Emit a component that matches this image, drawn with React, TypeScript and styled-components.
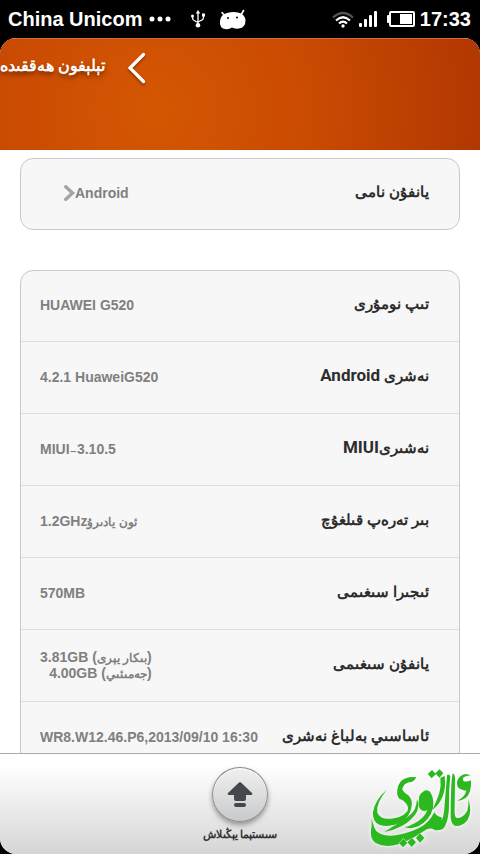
import React from "react";
import styled, { createGlobalStyle } from "styled-components";

const GlobalStyle = createGlobalStyle`
  * { box-sizing: border-box; }
  html, body { margin: 0; background: #000; }
  button { border: 0; padding: 0; background: none; font: inherit; color: inherit; cursor: pointer; }
`;

const arabic = `"Noto Sans", sans-serif`;
const latin = `"Liberation Sans", "DejaVu Sans", sans-serif`;

const Screen = styled.div`
  display: flex;
  flex-direction: column;
  height: 100vh;
  overflow: hidden;
  font-family: ${latin};
`;

const StatusBar = styled.div`
  display: flex;
  align-items: center;
  justify-content: space-between;
  flex: none;
  height: 38px;
  padding: 0 9px 0 8px;
  color: #fff;
  font-size: 20px;
  font-weight: 700;
  line-height: 38px;
`;

const StatusGroup = styled.div<{ $gap: number }>`
  display: flex;
  align-items: center;
  gap: ${(p) => p.$gap}px;
`;

const Window = styled.div`
  display: flex;
  flex-direction: column;
  flex: 1;
  min-height: 0;
  overflow: hidden;
  border-radius: 16px;
  background: #fff;
`;

const Header = styled.header`
  display: flex;
  align-items: flex-start;
  gap: 21px;
  flex: none;
  height: 112px;
  padding-top: 13px;
  color: #fff;
  border-top: 1px solid #d2693a;
  background: radial-gradient(circle 360px at 155px 70px, #d45703 0%, #ca4b02 42%, #bd4002 70%, #ad3401 100%);
`;

const Title = styled.h1`
  margin: 0;
  font-family: ${arabic};
  font-size: 16px;
  font-weight: 700;
  line-height: 26px;
  white-space: nowrap;
  text-shadow: 0 3px 4px rgba(70, 20, 0, 0.55);
`;

const BackButton = styled.button`
  display: flex;
  svg { filter: drop-shadow(0 2px 1px rgba(70, 20, 0, 0.5)); }
`;

const Content = styled.main`
  display: flex;
  flex-direction: column;
  gap: 40px;
  flex: 1;
  min-height: 0;
  overflow: hidden;
  padding: 8px 20px 0;
`;

const Card = styled.dl`
  flex: none;
  margin: 0;
  border: 1px solid #c8c8c8;
  border-radius: 13px;
  background: #f7f7f7;
`;

const Row = styled.div`
  display: flex;
  flex-direction: row-reverse;
  align-items: center;
  justify-content: space-between;
  height: 72px;
  padding: 0 30px 0 19px;
  border-bottom: 1px solid #dedede;
  &:first-child { height: 71px; }
  &:last-child { border-bottom: 0; }
  &:only-child { height: 70px; }
`;

const Label = styled.dt`
  padding-bottom: 6px;
  color: #2d2d2d;
  font-family: ${arabic};
  font-size: 15px;
  font-weight: 700;
  line-height: 24px;
  white-space: nowrap;
`;

const LabelLatin = styled.span`
  font-family: Roboto, sans-serif;
  font-size: 17px;
`;

const Value = styled.dd`
  margin: 0;
  padding-bottom: 2px;
  color: #808080;
  font-size: 14px;
  font-weight: 700;
  line-height: 16px;
  text-align: right;
  white-space: nowrap;
`;

const ValueLine = styled.div`
  height: 16px;
`;

const ValueArabic = styled.span`
  font-family: ${arabic};
  font-size: 12px;
`;

const NameButton = styled.button`
  display: flex;
  align-items: center;
  margin-left: 24px;
`;

const Footer = styled.footer`
  display: grid;
  grid-template-columns: 1fr auto 1fr;
  flex: none;
  height: 101px;
  border-top: 1px solid #a9a9a9;
  background: linear-gradient(#fff 0%, #fff 12%, #d5d5d5 100%);
`;

const UpdateButton = styled.button`
  display: flex;
  flex-direction: column;
  align-items: center;
  grid-column: 2;
  gap: 2px;
  padding-top: 13px;
  align-self: start;
  color: #333;
  font-family: ${arabic};
  font-size: 11px;
  font-weight: 700;
  line-height: 20px;
`;

const Disc = styled.span`
  display: flex;
  align-items: center;
  justify-content: center;
  width: 56px;
  height: 55px;
  border: 1px solid #8b8b8b;
  border-radius: 50%;
  background: linear-gradient(#f0f0f1, #c9cacc);
  box-shadow: 0 3px 5px rgba(0, 0, 0, 0.35), inset 0 1px 1px #fff;
`;

const Brand = styled.div`
  display: flex;
  justify-content: flex-end;
  align-items: flex-start;
  padding: 14px 6px 0 0;
  svg { filter: drop-shadow(0 0 2px #fff); }
`;

const Dots = () => (
  <svg width="22" height="6" viewBox="0 0 22 6" fill="#fff">
    <circle cx="3" cy="3" r="2.5" />
    <circle cx="11" cy="3" r="2.5" />
    <circle cx="19" cy="3" r="2.5" />
  </svg>
);

const Usb = () => (
  <svg width="16" height="18" viewBox="0 0 16 18" fill="none" stroke="#fff" strokeWidth="1.3">
    <path d="M8 3v12M2.500 5v3q0 2 2.500 3l3 1.500M13.500 5v2.500q0 2-2.500 3l-3 1.500" />
    <path d="M8 0l2.200 3.600H5.800z" fill="#fff" stroke="none" />
    <circle cx="8" cy="15.300" r="2.300" fill="#fff" stroke="none" />
    <circle cx="2.500" cy="6" r="1.500" fill="#fff" stroke="none" />
    <path d="M12 3.500h3v3h-3z" fill="#fff" stroke="none" />
  </svg>
);

const Mascot = () => (
  <svg width="28" height="21" viewBox="0 0 28 21">
    <path d="M3 3.500L6 7M24.500 1.500L22 6" stroke="#fff" strokeWidth="1.600" strokeLinecap="round" />
    <path
      d="M1 12Q2 5 8 4q6-1.500 11-.5 7 1.500 7.500 8 0 7-6.500 8-5 .5-7-1-2.500 2-6 1.800Q0 19.500 1 12z"
      fill="#fff"
    />
    <circle cx="9" cy="9" r="1" fill="#000" />
    <circle cx="18" cy="8.500" r="1" fill="#000" />
  </svg>
);

const Wifi = () => (
  <svg width="22" height="17" viewBox="0 0 22 17" fill="none" strokeWidth="2.200">
    <path d="M1 6.500Q11-2.500 21 6.500" stroke="#555" />
    <path d="M4 9.500Q11 3 18 9.500M7 12.500Q11 8.500 15 12.500" stroke="#fff" />
    <circle cx="11" cy="15" r="1.700" fill="#fff" />
  </svg>
);

const Signal = () => (
  <svg width="18" height="16" viewBox="0 0 18 16" fill="#fff">
    <rect y="12" width="3" height="4" rx="1" />
    <rect x="5" y="8" width="3" height="8" rx="1" />
    <rect x="10" y="4" width="3" height="12" rx="1" />
    <rect x="15" width="3" height="16" rx="1" />
  </svg>
);

const Battery = () => (
  <svg width="28" height="16" viewBox="0 0 28 16" fill="#fff">
    <rect x="3" y="1" width="24" height="14" rx="1" fill="none" stroke="#fff" strokeWidth="2" />
    <rect y="4" width="3" height="8" rx="1" />
    <rect x="13" y="3" width="12" height="10" />
  </svg>
);

const BackIcon = () => (
  <svg width="20" height="32" viewBox="0 0 20 32" fill="none" stroke="#fff" strokeWidth="3.200">
    <path d="M17.500 2.500L4 16l13.500 13.500" strokeLinecap="round" />
  </svg>
);

const Chevron = () => (
  <svg width="11" height="16" viewBox="0 0 11 16" fill="none" stroke="#a5a5a5" strokeWidth="3.500">
    <path d="M1.800 1.800L8.500 8l-6.700 6.200" strokeLinecap="round" />
  </svg>
);

const UpdateIcon = () => (
  <svg width="26" height="26" viewBox="0 0 26 26" fill="#45474c">
    <path d="M12 .6q1-.8 2 0l11 10.400q1 2-1 2h-5v4q0 2-2 2H9q-2 0-2-2v-4H2q-2 0-1-2z" />
    <rect x="7" y="21" width="12" height="4" rx="2" />
  </svg>
);

const BrandLogo = () => (
  <svg width="105" height="80" viewBox="30 70 315 240" fill="#2cb81f" role="img" aria-label="Brand logo">
    <path d="M172 98Q165 113 151 113Q135 116 130 132Q132 142 147 151Q161 163 158 184Q154 218 123 234Q89 250 61 240Q39 230 42 202Q48 165 83 136Q50 176 55 204Q63 224 94 222Q127 220 144 201Q151 190 142 177Q135 166 121 162Q112 151 115 136Q118 108 141 101Q154 95 172 98Z" />
    <path d="M174 163Q184 188 169 209Q151 235 120 248Q98 260 76 262Q107 242 132 226Q160 209 168 192Q173 178 174 163Z" />
    <path d="M180 165Q178 150 192 141Q205 132 214 143Q226 162 222 190Q213 226 178 245Q157 254 137 248Q170 238 190 219Q202 207 205 196Q192 203 183 192Q176 180 180 165Z" />
    <path d="M244 99L257 94Q262 130 250 157Q240 181 220 196Q234 167 241 145Q247 124 244 99Z" />
    <path d="M38 221Q44 252 54 261Q78 278 115 271Q151 265 184 248Q210 234 226 203Q234 216 248 218L250 249Q239 260 226 255Q212 247 196 258Q158 285 118 299Q74 311 47 293Q30 278 38 244Z" />
    <path d="M264 92Q269 86 274 95Q269 135 270 181Q270 220 258 245Q248 262 230 252Q251 235 255 202Q260 145 264 92Z" />
    <path d="M281 86Q287 88 288 98L287 188Q285 218 294 220Q307 221 318 209Q330 197 328 164Q340 202 326 225Q312 244 290 244Q276 240 275 217Q275 150 278 105Z" />
    <path d="M336 93Q326 90 314 98Q309 103 313 109Q322 113 336 107Q338 144 321 159Q309 168 294 168Q317 158 322 138Q305 137 296 127Q290 110 301 98Q318 81 336 93Z" />
    <path d="M219 76l12 12-13 13-12-13zM242 74l11 12-12 13-12-13z" />
    <path
      d="M133 282l12 13-13 13-12-13zM159 280l12 13-13 14-13-14zM183 266l13 14-13 14-12-14z"
      stroke="#e6eee4"
      strokeWidth="3"
      paintOrder="stroke"
    />
  </svg>
);

type Line = { latin?: string; open?: string; text?: string; close?: string };
type Detail = { label: string; latin?: string; lines: Line[] };

const details: Detail[] = [
  { label: "تىپ نومۇرى", lines: [{ latin: "HUAWEI G520" }] },
  { label: "نەشرى ", latin: "Android", lines: [{ latin: "4.2.1 HuaweiG520" }] },
  { label: "نەشىرى", latin: "MIUI", lines: [{ latin: "MIUI₋3.10.5" }] },
  { label: "بىر تەرەپ قىلغۇچ", lines: [{ latin: "1.2GHz", text: "ئون يادىرۇ" }] },
  { label: "ئىجىرا سىغىمى", lines: [{ latin: "570MB" }] },
  {
    label: "يانفۇن سىغىمى",
    lines: [
      { latin: "3.81GB ", open: "(", text: "بىكار يېرى", close: ")" },
      { latin: "4.00GB ", open: "(", text: "جەمىئىي", close: ")" },
    ],
  },
  { label: "ئاساسىي بەلباغ نەشرى", lines: [{ latin: "WR8.W12.46.P6,2013/09/10 16:30" }] },
];

export default function App() {
  return (
    <Screen>
      <GlobalStyle />
      <StatusBar>
        <StatusGroup $gap={19}>
          <StatusGroup $gap={7}>
            <span>China Unicom</span>
            <Dots />
          </StatusGroup>
          <StatusGroup $gap={13}>
            <Usb />
            <Mascot />
          </StatusGroup>
        </StatusGroup>
        <StatusGroup $gap={10}>
          <StatusGroup $gap={5}>
            <Wifi />
            <Signal />
          </StatusGroup>
          <StatusGroup $gap={5}>
            <Battery />
            <span>17:33</span>
          </StatusGroup>
        </StatusGroup>
      </StatusBar>
      <Window>
        <Header>
          <Title dir="rtl">تېلېفون ھەققىدە</Title>
          <BackButton aria-label="Back">
            <BackIcon />
          </BackButton>
        </Header>
        <Content>
          <Card>
            <Row>
              <Label dir="rtl">يانفۇن نامى</Label>
              <Value>
                <NameButton>
                  <Chevron />
                  Android
                </NameButton>
              </Value>
            </Row>
          </Card>
          <Card>
            {details.map((d) => (
              <Row key={d.label}>
                <Label dir="rtl">
                  {d.label}
                  {d.latin && <LabelLatin>{d.latin}</LabelLatin>}
                </Label>
                <Value>
                  {d.lines.map((line) => (
                    <ValueLine key={line.latin}>
                      {line.latin}
                      {line.open}
                      {line.text && <ValueArabic>{line.text}</ValueArabic>}
                      {line.close}
                    </ValueLine>
                  ))}
                </Value>
              </Row>
            ))}
          </Card>
        </Content>
        <Footer>
          <UpdateButton>
            <Disc>
              <UpdateIcon />
            </Disc>
            <span dir="rtl">سىستېما يېڭىلاش</span>
          </UpdateButton>
          <Brand>
            <BrandLogo />
          </Brand>
        </Footer>
      </Window>
    </Screen>
  );
}
